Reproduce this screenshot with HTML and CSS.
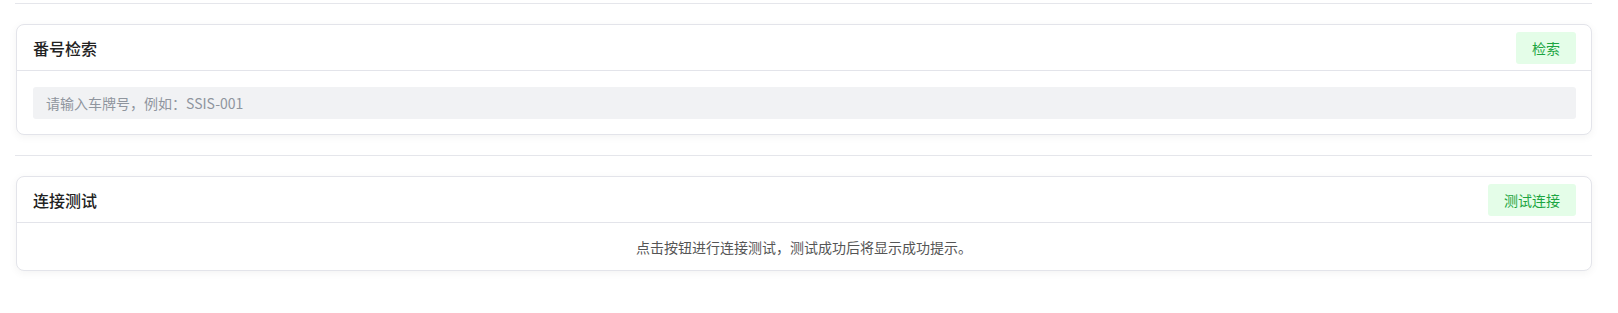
FILE: index.html
```html
<!DOCTYPE html>
<html lang="zh-CN">
<head>
    <meta charset="UTF-8">
    <meta name="viewport" content="width=device-width, initial-scale=1.0">
    <title>设置</title>
    <link rel="stylesheet" href="styles.css">
</head>
<body>
    <div class="page">
        <hr class="divider">
        <div class="card">
            <div class="card-header">
                <span class="card-title">番号检索</span>
                <button type="button" class="btn">检索</button>
            </div>
            <div class="card-body">
                <input type="text" class="search-input" placeholder="请输入车牌号，例如：SSIS-001">
            </div>
        </div>

        <hr class="divider">
        <div class="card">
            <div class="card-header">
                <span class="card-title">连接测试</span>
                <button type="button" class="btn">测试连接</button>
            </div>
            <div class="card-body card-body-text">
                <p class="hint">点击按钮进行连接测试，测试成功后将显示成功提示。</p>
            </div>
        </div>
    </div>
</body>
</html>
```

FILE: styles.css
```css
/* page layout */
body {
    margin: 0;
    font-family: "Noto Sans CJK SC", "Noto Sans", sans-serif;
    background: #fff;
    color: #1f2329;
}
.page {
    padding: 3px 26px 0 15px;
}
.divider {
    border: none;
    border-top: 1px solid #e5e6eb;
    margin: 0 0 20px 0;
}
.card {
    margin: 0 0 20px 1px;
    border: 1px solid #e3e4ea;
    border-radius: 8px;
    background: #fff;
    box-shadow: 0 2px 8px rgba(0, 0, 0, 0.05);
}
.card-header {
    display: flex;
    align-items: center;
    justify-content: space-between;
    padding: 7px 15px 6px 16px;
    border-bottom: 1px solid #e3e4ea;
}
.card-title {
    font-size: 16px;
    font-weight: 500;
    color: #222;
}
.btn {
    height: 32px;
    padding: 0 16px;
    border: none;
    border-radius: 3px;
    background: #e4fde8;
    color: #1ca541;
    font-family: inherit;
    font-size: 14px;
    cursor: pointer;
}
.card-body {
    padding: 16px 15px 15px 16px;
}
.search-input {
    display: block;
    width: 100%;
    height: 32px;
    padding: 0 13px;
    border: none;
    border-radius: 3px;
    background: #f1f2f4;
    font-family: inherit;
    font-size: 14px;
    color: #333;
    box-sizing: border-box;
    outline: none;
}
.search-input::placeholder {
    color: #8f959e;
}
.card-body-text {
    padding: 12px 16px 11px;
}
.hint {
    margin: 0;
    text-align: center;
    font-size: 14px;
    line-height: 24px;
    color: #555;
}
```
